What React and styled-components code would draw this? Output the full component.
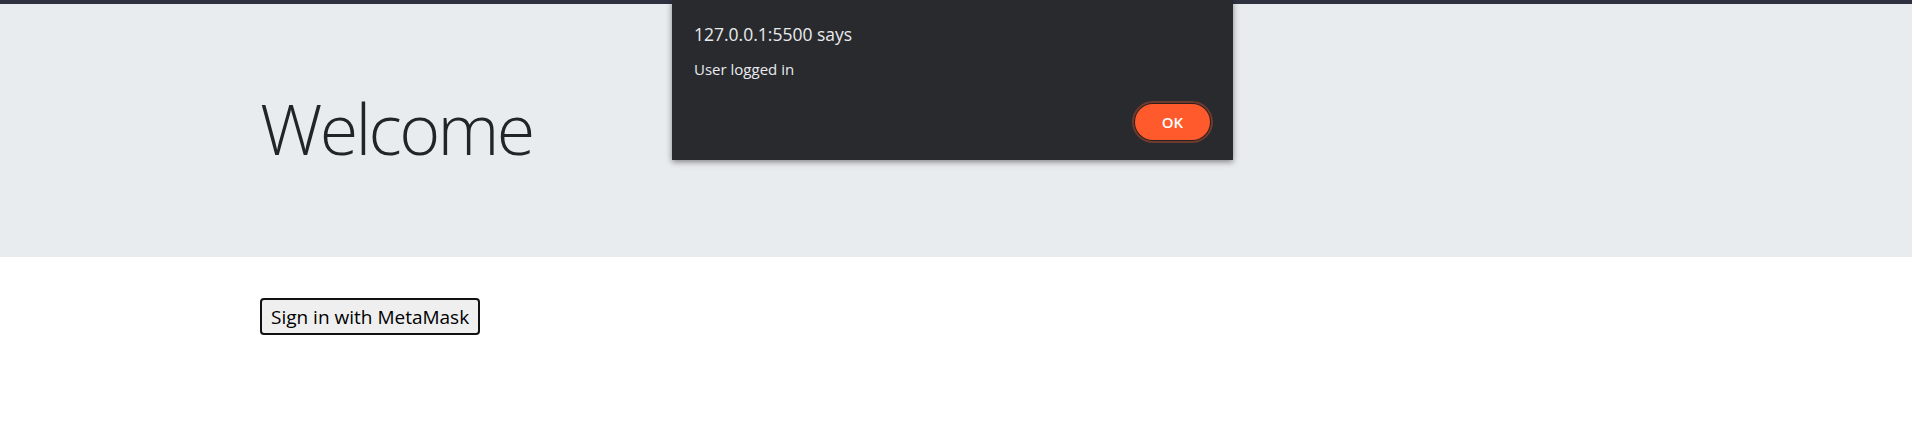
import React from "react";
import styled, { createGlobalStyle } from "styled-components";

const GlobalStyle = createGlobalStyle`
  body {
    margin: 0;
    background: #ffffff;
    font-family: "Open Sans", "Noto Sans", sans-serif;
  }
`;

const Page = styled.div`
  position: relative;
  width: 1912px;
  height: 426px;
  overflow: hidden;
`;

const TopBar = styled.div`
  height: 4px;
  background: #2f3140;
`;

const Jumbotron = styled.div`
  background: #e9ecef;
  padding: 82px 0 77px;
`;

const Container = styled.div`
  width: 1652px;
  padding: 0 0 0 260px;
`;

const Title = styled.h1`
  margin: 0 0 10px;
  font-family: "Open Sans", sans-serif;
  font-weight: 300;
  font-size: 70px;
  line-height: 84px;
  color: #212529;
  letter-spacing: -2.7px;
`;

const SignInButton = styled.button`
  margin-top: 41px;
  height: 37px;
  padding: 0 9px;
  font-family: "Open Sans", "Noto Sans", sans-serif;
  font-size: 19px;
  color: #000;
  background: #efefef;
  border: 2px solid #111;
  border-radius: 4px;
`;

const Dialog = styled.div`
  position: absolute;
  top: 0;
  left: 672px;
  width: 561px;
  height: 160px;
  box-sizing: border-box;
  padding: 21px 20px 20px 22px;
  background: #292a2d;
  box-shadow: 0 2px 6px rgba(0, 0, 0, 0.45);
  display: flex;
  flex-direction: column;
  color: #e8eaed;
`;

const DialogTitle = styled.div`
  font-size: 17.5px;
  line-height: 26px;
`;

const DialogMessage = styled.div`
  margin-top: 12px;
  font-size: 15px;
  line-height: 20px;
`;

const DialogActions = styled.div`
  margin-top: auto;
  display: flex;
  justify-content: flex-end;
`;

const OkButton = styled.button`
  width: 75px;
  height: 36px;
  margin-right: 3px;
  border: none;
  border-radius: 18px;
  background: #fe5a2b;
  color: #fff;
  font-family: "Open Sans", sans-serif;
  font-weight: 600;
  font-size: 15px;
  box-shadow: 0 0 0 1px #2a2020, 0 0 0 3px #6e3a2e;
`;

export default function App() {
  return (
    <Page>
      <GlobalStyle />
      <TopBar />
      <Jumbotron>
        <Container>
          <Title>Welcome</Title>
        </Container>
      </Jumbotron>
      <Container>
        <SignInButton>Sign in with MetaMask</SignInButton>
      </Container>
      <Dialog>
        <DialogTitle>127.0.0.1:5500 says</DialogTitle>
        <DialogMessage>User logged in</DialogMessage>
        <DialogActions>
          <OkButton>OK</OkButton>
        </DialogActions>
      </Dialog>
    </Page>
  );
}
